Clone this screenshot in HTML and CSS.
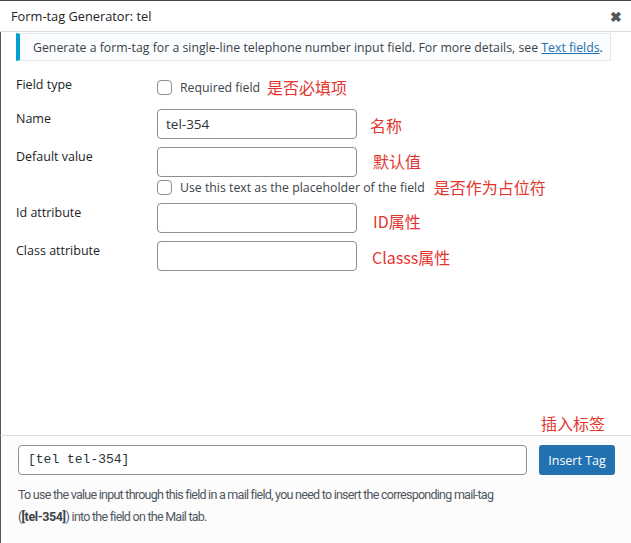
FILE: index.html
```html
<!DOCTYPE html>
<html lang="en">
<head>
<meta charset="utf-8">
<title>Form-tag Generator: tel</title>
<link rel="stylesheet" href="styles.css">
</head>
<body>
<div class="dialog">
  <header class="head">
    <h1 class="title">Form-tag Generator: tel</h1>
    <span class="close">✖</span>
  </header>
  <div class="main">
    <div class="notice">Generate a form-tag for a single-line telephone number input field. For more details, see <a href="#">Text fields</a>.</div>
    <div class="rows">
      <div class="row r-type">
        <div class="label">Field type</div>
        <div class="ctrl">
          <label class="check"><span class="box"></span><span>Required field</span></label>
          <span class="note n-req">是否必填项</span>
        </div>
      </div>
      <div class="row r-name">
        <div class="label">Name</div>
        <div class="ctrl">
          <div class="input">tel-354</div>
          <span class="note n-name">名称</span>
        </div>
      </div>
      <div class="row r-def">
        <div class="label">Default value</div>
        <div class="ctrl col">
          <div class="line">
            <div class="input"></div>
            <span class="note n-def">默认值</span>
          </div>
          <div class="line line-ph">
            <label class="check"><span class="box"></span><span>Use this text as the placeholder of the field</span></label>
            <span class="note n-ph">是否作为占位符</span>
          </div>
        </div>
      </div>
      <div class="row r-id">
        <div class="label">Id attribute</div>
        <div class="ctrl">
          <div class="input"></div>
          <span class="note n-id">ID属性</span>
        </div>
      </div>
      <div class="row r-class">
        <div class="label">Class attribute</div>
        <div class="ctrl">
          <div class="input"></div>
          <span class="note n-class">Classs属性</span>
        </div>
      </div>
    </div>
    <div class="insert-note"><span class="note">插入标签</span></div>
  </div>
  <footer class="foot">
    <div class="tagline">
      <div class="tag">[tel tel-354]</div>
      <button class="btn">Insert Tag</button>
    </div>
    <p class="desc">To use the value input through this field in a mail field, you need to insert the corresponding mail-tag<br>(<strong>[tel-354]</strong>) into the field on the Mail tab.</p>
  </footer>
</div>
</body>
</html>
```
FILE: styles.css
```css
* { box-sizing: border-box; }
html, body { margin: 0; padding: 0; background: #fff; }
body {
  font-family: "Open Sans", "Noto Sans", sans-serif;
  color: #1d2327;
  width: 631px;
  height: 543px;
  overflow: hidden;
}
.dialog {
  height: 543px;
  display: flex;
  flex-direction: column;
  border-top: 1px solid #444;
}
.head {
  height: 31px;
  display: flex;
  align-items: center;
  justify-content: space-between;
  padding: 0 9px 0 11px;
  border-bottom: 1px solid #dcdcde;
}
.title {
  margin: 0;
  font-size: 12.8px;
  font-weight: 400;
  color: #1d2327;
}
.close {
  font-size: 14px;
  color: #50575e;
  font-weight: 700;
}
.main {
  flex: 1;
  border-left: 1px solid #555;
  padding: 1px 20px 0 15px;
  display: flex;
  flex-direction: column;
}
.notice {
  height: 28px;
  border: 1px solid #e0e6ea;
  border-left: 4px solid #00a0d2;
  background: #fafcfd;
  font-size: 12.3px;
  color: #3c434a;
  padding: 5px 0 0 13px;
  white-space: nowrap;
}
.notice a { color: #2271b1; }
.rows {
  display: flex;
  flex-direction: column;
  padding-top: 15px;
  flex: 1;
}
.row { display: flex; }
.label {
  width: 141px;
  font-size: 12.5px;
  line-height: 17px;
  padding-top: 1px;
  color: #1d2327;
}
.r-type .label { padding-top: 0; }
.ctrl { display: flex; align-items: flex-start; }
.ctrl.col { flex-direction: column; }
.line { display: flex; align-items: flex-start; }
.check {
  display: flex;
  align-items: center;
  height: 20px;
  font-size: 12.3px;
  color: #3c434a;
}
.box {
  width: 15px;
  height: 15px;
  border: 1px solid #8c8f94;
  border-radius: 4px;
  background: #fff;
  margin-right: 8px;
}
.input {
  width: 200px;
  height: 30px;
  border: 1px solid #8c8f94;
  border-radius: 4px;
  background: #fff;
  font-size: 13.5px;
  color: #2c3338;
  padding: 5px 8px;
}
.note {
  font-family: "Noto Sans CJK SC", "Open Sans", sans-serif;
  color: #e3352f;
  font-size: 16px;
  line-height: 22px;
}
.r-type { height: 33px; }
.r-type .check { margin-top: 1px; }
.n-req { margin-left: 7px; }
.r-name { height: 38px; }
.n-name { margin-left: 13px; margin-top: 5px; }
.r-def { height: 56px; }
.n-def { margin-left: 16px; margin-top: 3px; }
.line-ph { height: 20px; }
.n-ph { margin-left: 9px; margin-top: -1px; }
.r-id { height: 38px; }
.n-id { margin-left: 16px; margin-top: 7px; }
.n-class { margin-left: 15px; margin-top: 5px; }
.insert-note {
  display: flex;
  justify-content: flex-end;
  padding-right: 6px;
  height: 23px;
}
.foot {
  height: 108px;
  border-top: 1px solid #dcdcde;
  border-left: 1px solid #555;
  background: #fcfcfc;
  padding: 9px 16px 0 17px;
}
.tagline { display: flex; gap: 12px; }
.tag {
  flex: 1;
  height: 30px;
  border: 1px solid #8c8f94;
  border-radius: 4px;
  background: #fff;
  font-family: "Liberation Mono", "DejaVu Sans Mono", monospace;
  font-size: 13px;
  color: #2c3338;
  padding: 6px 9px;
}
.btn {
  width: 76px;
  height: 30px;
  border: none;
  border-radius: 3px;
  background: #2271b1;
  color: #fff;
  font-family: "Open Sans", sans-serif;
  font-size: 12.5px;
  padding: 0;
}
.desc {
  margin: 9px 0 0;
  font-family: "Roboto", "Open Sans", sans-serif;
  font-size: 12.5px;
  letter-spacing: -0.74px;
  line-height: 22px;
  white-space: nowrap;
  color: #50575e;
}
.desc strong { color: #3c434a; letter-spacing: -0.4px; }
```
